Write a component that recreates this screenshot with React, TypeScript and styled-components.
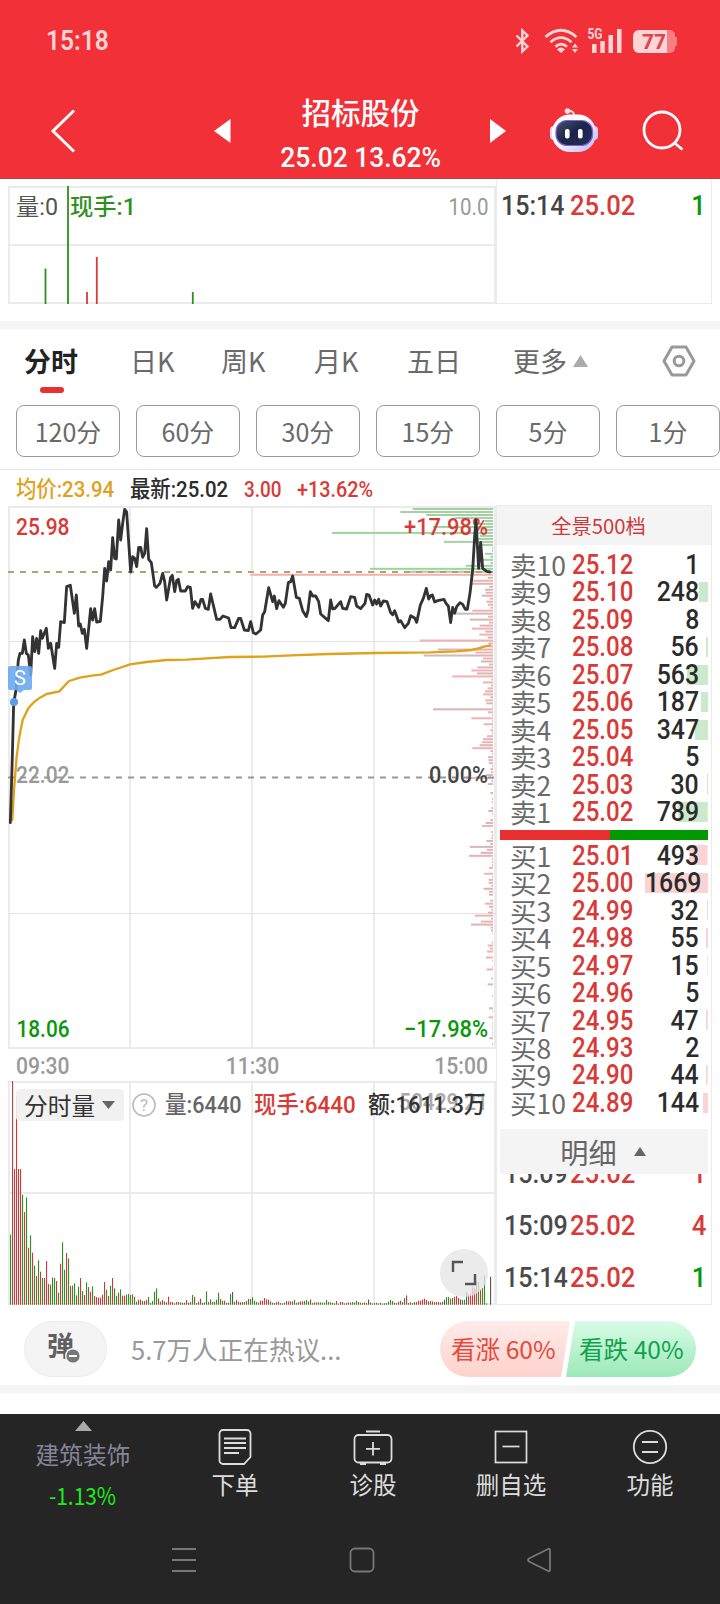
import React from "react";
import styled, { createGlobalStyle } from "styled-components";

const DIN = `Roboto, "Noto Sans CJK SC", sans-serif`;
const CJK = `"Noto Sans CJK SC", "Noto Sans", sans-serif`;
const RED = "#d93a38";
const GREEN = "#0a960a";
const GRID = "#ebebeb";

const GlobalStyle = createGlobalStyle`
  * { box-sizing: border-box; }
  body { margin: 0; background: #fff; font-family: ${CJK}; }
  svg { display: block; }
`;

const Screen = styled.div`
  width: 720px;
  height: 1604px;
  overflow: hidden;
  display: flex;
  flex-direction: column;
  background: #fff;
`;

/* Digits in the app are narrower than the stock face, so text is condensed horizontally. */
const Text = styled.span<{
  $size: number;
  $color: string;
  $sx?: number;
  $weight?: number;
  $origin?: string;
  $font?: string;
  $leading?: number;
}>`
  display: inline-block;
  white-space: nowrap;
  font-family: ${(p) => p.$font ?? DIN};
  font-size: ${(p) => p.$size}px;
  font-weight: ${(p) => p.$weight ?? 500};
  line-height: ${(p) => p.$leading ?? 1.15};
  color: ${(p) => p.$color};
  transform: scaleX(${(p) => p.$sx ?? 1});
  transform-origin: ${(p) => p.$origin ?? "left"} center;
`;

/* ---------- header ---------- */
const Header = styled.header`
  height: 179px;
  background: #f23038;
  border-bottom: 1px solid #b8474c;
  flex: none;
`;
const StatusBar = styled.div`
  height: 83px;
  padding: 0 43px 0 46px;
  display: flex;
  align-items: center;
  justify-content: space-between;
`;
const TitleBar = styled.div`
  height: 95px;
  display: grid;
  grid-template-columns: 50px 164px 276px 59px 93px 76px;
  align-items: center;
`;
const TitleBlock = styled.div`
  width: 292px;
  display: flex;
  justify-content: space-between;
  align-items: center;
`;
const TitleText = styled.div`
  display: flex;
  flex-direction: column;
  align-items: center;
  height: 95px;
  padding-top: 9px;
`;
const Name = styled.div`
  font: 500 29.5px/38px ${CJK};
  height: 50px;
  color: #fff;
`;

/* ---------- upper strip ---------- */
const UpperStrip = styled.section`
  display: flex;
  height: 142px;
  flex: none;
`;
const UpperTrade = styled.div`
  width: 216px;
  height: 125px;
  border: solid ${GRID};
  border-width: 0 1px 1px 1px;
  padding: 11px 5px 0 4px;
  display: grid;
  grid-template-columns: 69px 1fr auto;
  align-items: start;
`;
const Divider = styled.div`
  height: 8px;
  background: #f4f4f4;
  flex: none;
`;

/* ---------- tabs ---------- */
const Tabs = styled.nav`
  height: 76px;
  flex: none;
  padding-left: 24px;
  display: grid;
  grid-template-columns: 106px 91px 93px 93px 106px 151px 1fr;
`;
const Tab = styled.div<{ $active?: boolean }>`
  font: ${(p) => (p.$active ? 700 : 400)} 27px/38px ${CJK};
  color: ${(p) => (p.$active ? "#222" : "#6a6a6a")};
  padding-top: 13px;
  white-space: nowrap;
  display: flex;
  align-items: flex-start;
  &::after {
    content: "";
    display: ${(p) => (p.$active ? "block" : "none")};
    width: 24px;
    height: 6px;
    border-radius: 3px;
    background: #e53333;
    margin: 45px 0 0 -38px;
  }
`;
const More = styled.svg`
  margin: 13px 0 0 6px;
`;
const Gear = styled.svg`
  margin: 16px 0 0 -2px;
`;
const Chips = styled.div`
  display: flex;
  gap: 16px;
  padding-left: 16px;
  height: 65px;
  border-bottom: 1px solid #e6e6e6;
  flex: none;
`;
const Chip = styled.div`
  flex: none;
  width: 104px;
  height: 52px;
  border: 1px solid #999;
  border-radius: 8px;
  font: 400 25px/50px ${CJK};
  color: #6a6a6a;
  text-align: center;
`;
const InfoRow = styled.div`
  height: 35px;
  flex: none;
  padding: 7px 0 0 16px;
  display: grid;
  grid-template-columns: 114px 114px 53px 1fr;
`;

/* ---------- board ---------- */
const Board = styled.section`
  display: flex;
  height: 801px;
  flex: none;
`;
const Left = styled.div`
  width: 496px;
`;
const Times = styled.div`
  height: 31px;
  padding: 3px 8px 0 16px;
  display: flex;
  justify-content: space-between;
`;
const VolumeArea = styled.div`
  position: relative;
`;
const Legend = styled.div`
  position: absolute;
  inset: 8px 0 auto 16px;
  display: grid;
  grid-template-columns: 116px 33px 89px 114px 1fr;
  align-items: center;
`;
const Selector = styled.div`
  width: 108px;
  height: 32px;
  border-radius: 4px;
  background: rgba(240, 240, 240, 0.92);
  display: flex;
  align-items: center;
  gap: 7px;
  padding-left: 8px;
  font: 400 23.7px/30px ${CJK};
  color: #333;
`;
const Expand = styled.div`
  position: absolute;
  left: 440px;
  top: 168px;
  width: 48px;
  height: 48px;
  border-radius: 50%;
  background: rgba(230, 230, 230, 0.78);
`;
const Book = styled.aside`
  width: 216px;
  height: 800px;
  border: 1px solid ${GRID};
  overflow: hidden;
`;
const BookHead = styled.div`
  height: 39px;
  margin-bottom: 6px;
  background: #f4f4f4;
  text-align: center;
  padding-right: 11px;
  font: 400 20.3px/38px ${CJK};
  color: #d0393a;
`;
const Level = styled.div<{ $bar: number; $tint: string }>`
  height: 27.48px;
  margin-right: 3px;
  padding: 0 9px 0 13px;
  display: grid;
  grid-template-columns: 61.5px 1fr auto;
  align-items: center;
  background: linear-gradient(${(p) => p.$tint}, ${(p) => p.$tint}) right center / ${(p) => p.$bar}px 20px no-repeat;
`;
const LevelName = styled.div`
  font: 400 26.5px/27px ${CJK};
  height: 29px;
  color: #6a6a6a;
  white-space: nowrap;
`;
const Ratio = styled.div`
  height: 10px;
  margin: 4px 3px 2px;
  display: flex;
  background: #009900;
  &::before {
    content: "";
    width: 110px;
    background: #e93030;
  }
`;
const DetailHead = styled.div`
  position: relative;
  height: 45px;
  margin: 13px 3px 0;
  background: #f4f4f4;
  display: flex;
  align-items: center;
  justify-content: center;
  gap: 17px;
  padding-right: 2px;
  font: 400 28.2px/44px ${CJK};
  color: #666;
`;
const Trades = styled.div`
  height: 130px;
  overflow: hidden;
  padding: 0 5px 0 7px;
`;
const Trade = styled.div`
  height: 52px;
  display: grid;
  grid-template-columns: 66px 1fr auto;
  align-items: center;
  &:first-child { margin-top: -26px; }
`;

/* ---------- discussion ---------- */
const Talk = styled.section`
  height: 79px;
  flex: none;
  padding: 15px 24px 0;
  display: flex;
`;
const Danmu = styled.div`
  width: 83px;
  height: 56px;
  border-radius: 28px;
  background: #f4f4f4;
  border: 1px solid #ececec;
  padding: 5px 0 0 22px;
  position: relative;
  font: 700 27px/36px ${CJK};
  color: #5f5f5f;
`;
const Minus = styled.svg`
  position: absolute;
  left: 40px;
  top: 26px;
`;
const Prompt = styled.div`
  flex: 1;
  padding-left: 24px;
  font: 400 25.6px/56px ${CJK};
  color: #999;
  white-space: nowrap;
`;
const Vote = styled.div<{ $up?: boolean }>`
  width: 130px;
  height: 56px;
  margin-left: ${(p) => (p.$up ? 0 : -4)}px;
  border-radius: ${(p) => (p.$up ? "28px 0 0 28px" : "0 28px 28px 0")};
  clip-path: ${(p) =>
    p.$up ? "polygon(0 0, 100% 0, 121px 100%, 0 100%)" : "polygon(9px 0, 100% 0, 100% 100%, 0 100%)"};
  background: ${(p) =>
    p.$up ? "linear-gradient(#feebe9, #fdd2cc)" : "linear-gradient(#d8fce6, #9de8ba)"};
  color: ${(p) => (p.$up ? "#e8493c" : "#11a34b")};
  padding-left: ${(p) => (p.$up ? 11 : 13)}px;
  font: 400 24.6px/54px ${CJK};
  white-space: nowrap;
`;
const Gap = styled.div`
  height: 21px;
  flex: none;
`;

/* ---------- bottom ---------- */
const Bottom = styled.footer`
  flex: 1;
  background: #252525;
`;
const Actions = styled.div`
  height: 114px;
  display: grid;
  grid-template-columns: 166px 138px 138px 138px 140px;
`;
const Sector = styled.div`
  display: flex;
  flex-direction: column;
  align-items: center;
  padding-top: 7px;
  font: 400 23.7px/34px ${CJK};
  color: #85859a;
`;
const SectorName = styled.div`
  margin: 6px 0 10px;
`;
const Action = styled.div`
  display: flex;
  flex-direction: column;
  align-items: center;
  padding-top: 14px;
  font: 400 23.5px/37px ${CJK};
  color: #ddd;
`;
const NavBar = styled.div`
  padding: 19px 168px 0 171px;
  display: flex;
  justify-content: space-between;
`;

/* ---------- data ---------- */
type Row = [string, string, number];
const asks: Row[] = [
  ["卖10", "25.12", 1], ["卖9", "25.10", 248], ["卖8", "25.09", 8], ["卖7", "25.08", 56], ["卖6", "25.07", 563],
  ["卖5", "25.06", 187], ["卖4", "25.05", 347], ["卖3", "25.04", 5], ["卖2", "25.03", 30], ["卖1", "25.02", 789],
];
const bids: Row[] = [
  ["买1", "25.01", 493], ["买2", "25.00", 1669], ["买3", "24.99", 32], ["买4", "24.98", 55], ["买5", "24.97", 15],
  ["买6", "24.96", 5], ["买7", "24.95", 47], ["买8", "24.93", 2], ["买9", "24.90", 44], ["买10", "24.89", 144],
];
const trades: [string, string, string, string][] = [
  ["15:09", "25.02", "1", RED],
  ["15:09", "25.02", "4", RED],
  ["15:14", "25.02", "1", GREEN],
];

/* Series are kept in thirds of a pixel. */
const price =
  "31,998 37,800 41,640 48,600 55,510 60,490 67,490 73,450 79,490 85,495 92,555 98,440 104,485 110,445 116,490 122,422 127,445 139,415 145,475 152,460 164,535 170,460 176,472 182,395 193,398 200,290 211,286 223,370 229,315 236,408 241,402 247,430 253,418 260,475 272,356 278,390 284,356 290,396 301,394 308,320 314,235 320,273 326,215 332,240 338,143 344,205 349,207 356,90 362,150 368,100 374,58 380,66 392,246 398,200 404,205 410,230 416,172 422,172 428,202 434,190 440,116 446,208 454,218 464,288 469,292 480,280 488,250 494,275 500,330 512,262 517,256 524,305 530,272 535,268 542,303 556,303 563,290 571,292 578,355 585,335 596,352 603,328 608,328 616,355 625,358 632,312 650,388 660,388 669,378 686,384 693,413 704,413 716,385 722,385 733,420 745,422 752,395 760,428 768,432 782,420 788,375 794,365 806,293 818,335 823,318 830,356 837,332 850,352 856,340 865,278 872,275 878,258 889,322 898,325 908,362 919,380 924,362 931,305 938,318 947,318 956,335 962,372 985,392 992,330 998,357 1005,355 1022,335 1028,355 1040,357 1052,320 1064,322 1070,348 1082,356 1095,340 1100,313 1107,315 1118,345 1124,330 1130,342 1136,328 1142,348 1150,333 1161,335 1172,368 1178,374 1184,362 1196,396 1202,392 1214,413 1225,400 1232,377 1244,384 1250,397 1261,345 1270,325 1279,295 1286,327 1292,317 1297,315 1304,336 1313,332 1332,328 1338,340 1345,348 1352,398 1358,352 1364,370 1370,350 1380,338 1388,343 1396,358 1402,358 1410,310 1418,240 1424,140 1428,90 1436,235 1442,157 1448,235 1460,244 1470,246";
const average =
  "37,990 42,900 50,800 58,740 68,690 85,655 100,638 120,623 140,612 178,604 207,573 240,563 275,557 303,554 340,540 390,523 440,516 500,510 560,509 620,505 690,501 790,500 875,496 985,492 1125,489 1290,487 1370,484 1415,480 1435,475 1455,469 1470,467";
const depth = [
  241, 278, 200, 114, 25, 60, 180, 30, 483, 40, 45, 147, 40, 3, 3, 24, 8, 33, 8, 82, 369, 265, 728, 16, 60, 68, 12, 24,
  22, 34, 10, 20, 15, 8, 62, 110, 15, 70, 12, 40, 63, 24, 41, 16, 220, 14, 10, 165, 53, 208, 30, 36, 12, 47, 65, 48,
  122, 5, 30, 6, 16, 24, 30, 8, 23, 20, 3, 180, 15, 3, 65, 3, 28, 3, 8, 3, 18, 30, 33, 40, 62, 8, 3, 15, 14, 12, 3, 8,
  6, 22, 80, 5, 16, 0, 0, 8, 0, 3, 3, 0, 5, 14, 3, 0, 8, 22, 33, 0, 5, 3, 5, 20, 8, 70, 18, 37, 72, 3, 3, 3, 12, 0, 27,
  3, 13, 13, 5, 28, 12, 12, 0, 8, 24, 12, 5, 15, 54, 6, 36, 66, 8, 6, 2, 0, 0, 4, 16, 9, 18, 0, 21, 2, 0, 2, 19, 0, 0,
  5, 0, 16, 0, 0, 0, 3, 0, 0, 0, 12, 2, 0, 13, 0, 2, 2, 2, 2, 2, 11, 0, 3,
];
const volume =
  "210g 671r 407r 627r 407r 407r 330g 278r 322g 171r 208g 156r 117g 86r 133g 99r 80g 80r 131r 62r 60g 82g 80g 71r 36g 123r 187g 105g 155r 139g 56r 57g 64g 28r 54g 80r 41g 29r 67g 53r 39r 55g 26r 23r 21r 21r 30r 68r 45g 26r 57g 80r 49g 27g 36r 46g 27r 27r 30g 32g 29g 31r 24g 9g 15r 15r 11g 11r 14r 23g 5g 11g 39g 49g 19r 9r 14r 10g 7r 24r 8r 8r 4g 8r 8r 7g 6g 6r 14r 6k 8g 29g 24r 5g 9g 18r 5k 7g 40g 8g 16r 8g 9g 15g 36g 17r 12g 12r 6g 6r 32g 38k 9g 14r 9r 7k 8g 8r 11g 17r 17g 22g 12g 8g 6r 12r 12r 20r 16r 15r 10g 6g 5r 8r 9r 5g 4g 6r 11r 10r 10r 10r 14g 6r 8g 10r 10r 11g 14g 10g 16r 5g 7g 7r 7g 7g 6g 6g 14g 8r 7g 6g 4k 11r 3g 8r 8r 4g 5r 7g 6r 8g 7g 12g 8r 6g 5r 7r 5g 15k 7g 4g 5r 6g 4g 6r 3g 4k 5g 9g 14g 11g 6r 5g 9r 12r 8g 20g 28r 5r 7r 5g 8g 8r 12r 12r 15r 18r 14r 10g 11r 10r 8g 8r 8r 7g 9r 15k 23g 23g 18r 20g 24r 26r 20r 16k 14g 15g 38k 30r 33r 52r 50r 70r 68g 46r 50g 88g 4g 0g 84k".split(
    " ",
  );
const volColor: Record<string, string> = { r: "#c43c3c", g: "#2f8f1f", k: "#555" };

const ChartText = ({
  x, y, w, fill, size = 24, end, children,
}: { x: number; y: number; w: number; fill: string; size?: number; end?: boolean; children: string }) => (
  <text
    x={x} y={y} textLength={w} lengthAdjust="spacingAndGlyphs" textAnchor={end ? "end" : "start"}
    fill={fill} fontFamily="Roboto" fontSize={size} fontWeight={500}
  >
    {children}
  </text>
);

const Arrow = ({ w, h, fill, down }: { w: number; h: number; fill: string; down?: boolean }) => (
  <svg width={w} height={h} viewBox="0 0 10 10" preserveAspectRatio="none">
    <path d={down ? "M0 0h10L5 10z" : "M5 0L10 10H0z"} fill={fill} />
  </svg>
);

const StatusIcons = () => (
  <svg width="162" height="30" viewBox="515 27 162 30" fill="#fdd5d7">
    <path d="M516.5 35.5L527.5 46.5L522.3 51.5V30.5L527.5 35.5L516.5 46.5" fill="none" stroke="#fdd5d7" strokeWidth="2.4" />
    <g fill="none" stroke="#fdd5d7" strokeWidth="2.8">
      <path d="M545.5 37Q561 23.500 576.500 37" />
      <path d="M550.5 42.200Q561 33 571.500 42.200" />
      <path d="M555.500 46.800Q561 41.500 567 46.800" />
    </g>
    <path d="M557 49.500Q561 45.500 565 49.500L561 53zM575 43.500l3 4h-6zM575 53l3-4h-6z" />
    <text x="587.500" y="38.500" fontFamily="Roboto" fontWeight="700" fontSize="14" textLength="15" lengthAdjust="spacingAndGlyphs">5G</text>
    <path d="M592 44h4.500v9H592zM600.300 41h4.500v12h-4.500zM608.500 35h4.500v18h-4.500zM617 29h4.500v24H617z" />
    <path d="M667 30h3a5 5 0 0 1 5 5v1.500a2 2 0 0 1 2 2v6a2 2 0 0 1-2 2V48a5 5 0 0 1-5 5h-3z" fill="#f77f84" />
    <path d="M639 30h28v23h-28a6 6 0 0 1-6-6V36a6 6 0 0 1 6-6z" />
    <text x="642" y="49" fontFamily="Roboto" fontWeight="800" fontSize="20.500" fill="#e2464d" textLength="24" lengthAdjust="spacingAndGlyphs">77</text>
  </svg>
);

const Robot = () => (
  <svg width="50" height="46" viewBox="549 107 50 46">
    <defs>
      <linearGradient id="shell" x1="0" y1="0" x2="1" y2="1">
        <stop offset="0.400" stopColor="#fff" />
        <stop offset="1" stopColor="#b9b3f5" />
      </linearGradient>
      <linearGradient id="face" x1="0" y1="0" x2="1" y2="1">
        <stop offset="0" stopColor="#46506f" />
        <stop offset="0.500" stopColor="#1b2448" />
        <stop offset="1" stopColor="#25305c" />
      </linearGradient>
    </defs>
    <path d="M567 110.500q7-2 7.500 5" fill="none" stroke="#fbdfe6" strokeWidth="2" />
    <circle cx="567.500" cy="110" r="2.800" fill="#fbe3e8" />
    <rect x="550" y="125" width="8" height="14" rx="4" fill="#dcd8fb" />
    <rect x="590" y="125" width="8" height="14" rx="4" fill="#d0cbfb" />
    <rect x="552" y="113.500" width="44" height="37.500" rx="18" fill="url(#shell)" />
    <rect x="556" y="119.500" width="36.500" height="25" rx="11" fill="url(#face)" stroke="#7d62dd" strokeWidth="1.200" />
    <rect x="565" y="128" width="4.600" height="9.500" rx="2" fill="#fff" />
    <rect x="578" y="128" width="4.600" height="9.500" rx="2" fill="#fff" />
  </svg>
);

const UpperChart = () => (
  <svg width="496" height="126" viewBox="0 179 496 126">
    <g stroke={GRID} strokeWidth="2">
      <path d="M8 187H496M8 245H496M8 303H496M9 187V304M495 187V304" fill="none" />
    </g>
    <g fontFamily={DIN} fontWeight="400" fontSize="23">
      <text x="16" y="215" fill="#555" textLength="42" lengthAdjust="spacingAndGlyphs">量:0</text>
      <text x="70" y="215" fill="#2f8f1f" fontWeight="500" textLength="66" lengthAdjust="spacingAndGlyphs">现手:1</text>
      <text x="448.500" y="215" fill="#999" textLength="40" lengthAdjust="spacingAndGlyphs">10.0</text>
    </g>
    <path d="M68 186V304M45.500 268.500V304M192.800 292V304" stroke="#2f8f1f" strokeWidth="1.800" />
    <path d="M87 292V304M96.800 257V304" stroke="#d93a38" strokeWidth="1.800" />
  </svg>
);

const PriceChart = () => (
  <svg width="496" height="545" viewBox="0 505 496 545">
    <path d="M8 507H496M9 506V1049M130 506V1049M252 506V1049M374 506V1049M495 506V1049M8 1048H496" stroke={GRID} strokeWidth="2" fill="none" />
    <path d="M9 641.500H496M9 913.500H496" stroke="#e2e2e2" />
    {depth.map((n, i) => (
      <rect
        key={i} x={493 - n / 3} y={508 + i * 2.99} width={n / 3} height="2"
        fill={i < 22 ? (i % 2 ? "#a9cfa9" : "#9cd49c") : i % 2 ? "#d8b6b6" : "#f2b0b0"}
      />
    ))}
    <path d="M8 572H493" stroke="#b3a26c" strokeWidth="2" strokeDasharray="6 6" />
    <path d="M8 777.500H495" stroke="#999" strokeWidth="2" strokeDasharray="6 6" />
    <ChartText x={16} y={535} w={53.5} fill={RED}>25.98</ChartText>
    <ChartText x={16} y={783} w={53.5} fill="#999">22.02</ChartText>
    <ChartText x={16.5} y={1037} w={53} fill={GREEN}>18.06</ChartText>
    <ChartText x={488} y={535} w={84} fill={RED} end>+17.98%</ChartText>
    <ChartText x={488} y={783} w={59} fill="#444" end>0.00%</ChartText>
    <ChartText x={488} y={1037} w={84} fill={GREEN} end>−17.98%</ChartText>
    <g transform="translate(0 490) scale(0.33333)" fill="none" strokeLinejoin="round" strokeLinecap="round">
      <polyline points={average} stroke="#e0a11b" strokeWidth="7" />
      <polyline points={price} stroke="#333" strokeWidth="8.500" />
    </g>
    <path d="M10 666h20a2 2 0 0 1 2 2v20a2 2 0 0 1-2 2h-6l-4 3-4-3h-6a2 2 0 0 1-2-2v-20a2 2 0 0 1 2-2z" fill="#6aa8ef" fillOpacity="0.900" />
    <text x="20" y="685" textAnchor="middle" fill="#fff" fontFamily="Roboto" fontSize="20">S</text>
    <circle cx="14" cy="702" r="4" fill="#5b9be8" />
  </svg>
);

const VolumeChart = () => (
  <svg width="496" height="224" viewBox="0 1081 496 224">
    <path d="M8 1082H496M8 1193H496M8 1304H496M9 1081V1305M130 1081V1305M252 1081V1305M374 1081V1305M495 1081V1305" stroke={GRID} strokeWidth="2" fill="none" />
    {volume.map((v, i) => {
      const h = parseInt(v, 10) / 3;
      return <rect key={i} x={10 + i * 2} y={1304.7 - h} width="1.1" height={h} fill={volColor[v.slice(-1)]} />;
    })}
    <ChartText x={488} y={1110} w={89} fill="#aaa" size={23} end>50429.21</ChartText>
  </svg>
);

const Levels = ({ rows, tint }: { rows: Row[]; tint: string }) => (
  <>
    {rows.map(([label, p, qty]) => (
      <Level key={label} $tint={tint} $bar={Math.min(63, (qty / 1669) * 63)}>
        <LevelName>{label}</LevelName>
        <Text $size={27} $color={RED} $sx={0.89} $leading={1}>{p}</Text>
        <Text $size={27} $color="#2b2b2b" $sx={0.92} $origin="right" $leading={1}>{qty}</Text>
      </Level>
    ))}
  </>
);

export default function App() {
  return (
    <Screen>
      <GlobalStyle />
      <Header>
        <StatusBar>
          <Text $size={27} $color="#fdd5d7" $weight={600} $sx={0.91}>15:18</Text>
          <StatusIcons />
        </StatusBar>
        <TitleBar>
          <span />
          <svg width="26" height="44" viewBox="0 0 26 44">
            <path d="M24 1.500L3 22L24 42.500" fill="none" stroke="#fff" strokeWidth="3" />
          </svg>
          <TitleBlock>
            <svg width="17" height="24"><path d="M16.500 0V24L0 12z" fill="#fff" /></svg>
            <TitleText>
              <Name>招标股份</Name>
              <Text $size={27.5} $color="#fff" $sx={0.96} $weight={500} $origin="center">25.02 13.62%</Text>
            </TitleText>
            <svg width="16" height="24"><path d="M0 0V24L16 12z" fill="#fff" /></svg>
          </TitleBlock>
          <span />
          <Robot />
          <svg width="42" height="42" viewBox="643 110 42 42" fill="none" stroke="#fff" strokeWidth="2.800">
            <circle cx="663" cy="130" r="18" />
            <path d="M675.500 143L683.500 149.500" />
          </svg>
        </TitleBar>
      </Header>

      <UpperStrip>
        <UpperChart />
        <UpperTrade>
          <Text $size={27.5} $color="#444" $sx={0.91}>15:14</Text>
          <Text $size={27.5} $color={RED} $sx={0.93}>25.02</Text>
          <Text $size={27.5} $color={GREEN} $sx={0.92} $origin="right">1</Text>
        </UpperTrade>
      </UpperStrip>
      <Divider />

      <Tabs>
        <Tab $active>分时</Tab>
        <Tab>日K</Tab>
        <Tab>周K</Tab>
        <Tab>月K</Tab>
        <Tab>五日</Tab>
        <Tab>
          更多
          <More width="15" height="12"><path d="M7.500 0L15 12H0z" fill="#aaa" /></More>
        </Tab>
        <Gear width="34" height="32" viewBox="0 0 34 32" fill="none" stroke="#999" strokeWidth="3" strokeLinejoin="round">
          <path d="M10 2H24L32 16L24 30H10L2 16z" />
          <circle cx="17" cy="16" r="4.800" />
        </Gear>
      </Tabs>
      <Chips>
        {["120分", "60分", "30分", "15分", "5分", "1分"].map((c) => (
          <Chip key={c}>{c}</Chip>
        ))}
      </Chips>
      <InfoRow>
        <Text $size={22.5} $color="#e0a11b" $sx={0.905}>均价:23.94</Text>
        <Text $size={22.5} $color="#2b2b2b" $sx={0.905}>最新:25.02</Text>
        <Text $size={22.5} $color={RED} $sx={0.84}>3.00</Text>
        <Text $size={22.5} $color={RED} $sx={0.88}>+13.62%</Text>
      </InfoRow>

      <Board>
        <Left>
          <PriceChart />
          <Times>
            {["09:30", "11:30", "15:00"].map((t, i) => (
              <Text key={t} $size={24} $color="#999" $sx={0.88} $origin={["left", "center", "right"][i]}>{t}</Text>
            ))}
          </Times>
          <VolumeArea>
            <VolumeChart />
            <Legend>
              <Selector>
                分时量
                <Arrow w={13} h={8} fill="#666" down />
              </Selector>
              <svg width="24" height="24" viewBox="0 0 24 24">
                <circle cx="12" cy="12" r="11" fill="none" stroke="#bbb" strokeWidth="1.600" />
                <text x="12" y="18" textAnchor="middle" fontFamily="Roboto" fontSize="17" fill="#bbb">?</text>
              </svg>
              <Text $size={23.5} $color="#666" $sx={0.92} $leading={1.3}>量:6440</Text>
              <Text $size={23.5} $color={RED} $sx={0.955} $leading={1.3}>现手:6440</Text>
              <Text $size={23.5} $color="#333" $sx={0.93} $leading={1.3}>额:1611.3万</Text>
            </Legend>
            <Expand>
              <svg width="48" height="48" viewBox="0 0 48 48" fill="none" stroke="#555" strokeWidth="2.400">
                <path d="M13 23V13H23M25 35H35V25" />
              </svg>
            </Expand>
          </VolumeArea>
        </Left>
        <Book>
          <BookHead>全景500档</BookHead>
          <Levels rows={asks} tint="#cce9cc" />
          <Ratio />
          <Levels rows={bids} tint="#fad4d4" />
          <DetailHead>
            明细
            <Arrow w={12} h={9} fill="#666" />
          </DetailHead>
          <Trades>
            {trades.map(([t, p, q, c], i) => (
              <Trade key={i}>
                <Text $size={27} $color="#4a4a4a" $sx={0.93}>{t}</Text>
                <Text $size={27} $color={RED} $sx={0.95}>{p}</Text>
                <Text $size={27} $color={c} $sx={0.95} $origin="right">{q}</Text>
              </Trade>
            ))}
          </Trades>
        </Book>
      </Board>

      <Talk>
        <Danmu>
          弹
          <Minus width="16" height="16" viewBox="0 0 16 16">
            <circle cx="8" cy="8" r="7.300" fill="#777" stroke="#f4f4f4" strokeWidth="1.400" />
            <path d="M4 8h8" stroke="#fff" strokeWidth="2" />
          </Minus>
        </Danmu>
        <Prompt>5.7万人正在热议...</Prompt>
        <Vote $up>看涨 60%</Vote>
        <Vote>看跌 40%</Vote>
      </Talk>
      <Divider />
      <Gap />

      <Bottom>
        <Actions>
          <Sector>
            <Arrow w={17} h={10} fill="#aaa" />
            <SectorName>建筑装饰</SectorName>
            <Text $size={24} $color="#1cee1c" $weight={400} $font={CJK} $sx={0.87} $origin="center">-1.13%</Text>
          </Sector>
          <Action>
            <svg width="40" height="38" viewBox="0 0 40 38" fill="none" stroke="#ddd" strokeWidth="1.800">
              <path d="M8 2H32a3.500 3.500 0 0 1 3.500 3.500V29L29 36H8a3.500 3.500 0 0 1-3.500-3.500V5.500A3.500 3.500 0 0 1 8 2z" />
              <path d="M9 10.500H31M9 15H31M9 20H31M9 25H24" />
            </svg>
            下单
          </Action>
          <Action>
            <svg width="40" height="38" viewBox="0 0 40 38" fill="none" stroke="#ddd" strokeWidth="1.800">
              <rect x="1.500" y="7" width="37" height="27.500" rx="4" />
              <path d="M13 3.500H27M20 14V27.500M13 20.800H27M7 36H13M27 36H33" />
            </svg>
            诊股
          </Action>
          <Action>
            <svg width="40" height="38" viewBox="0 0 40 38" fill="none" stroke="#ddd" strokeWidth="1.700">
              <rect x="4.500" y="3.500" width="31" height="31" />
              <path d="M11.500 18.500H28.500" />
            </svg>
            删自选
          </Action>
          <Action>
            <svg width="40" height="38" viewBox="0 0 40 38" fill="none" stroke="#ddd" strokeWidth="1.800">
              <circle cx="20" cy="19" r="16.200" />
              <path d="M12 14H28M12 24H28" />
            </svg>
            功能
          </Action>
        </Actions>
        <NavBar>
          <svg width="26" height="26" stroke="#777" strokeWidth="2"><path d="M1 2H25M1 13H25M1 24H25" /></svg>
          <svg width="26" height="26" fill="none" stroke="#777" strokeWidth="1.800"><rect x="1.500" y="1.500" width="23" height="23" rx="4.500" /></svg>
          <svg width="26" height="26" fill="none" stroke="#777" strokeWidth="1.800"><path d="M22.500 1.800Q24 1.500 24 3.500V22.500Q24 24.500 22.500 24.200L3 14.500Q1 13 3 11.500z" /></svg>
        </NavBar>
      </Bottom>
    </Screen>
  );
}
